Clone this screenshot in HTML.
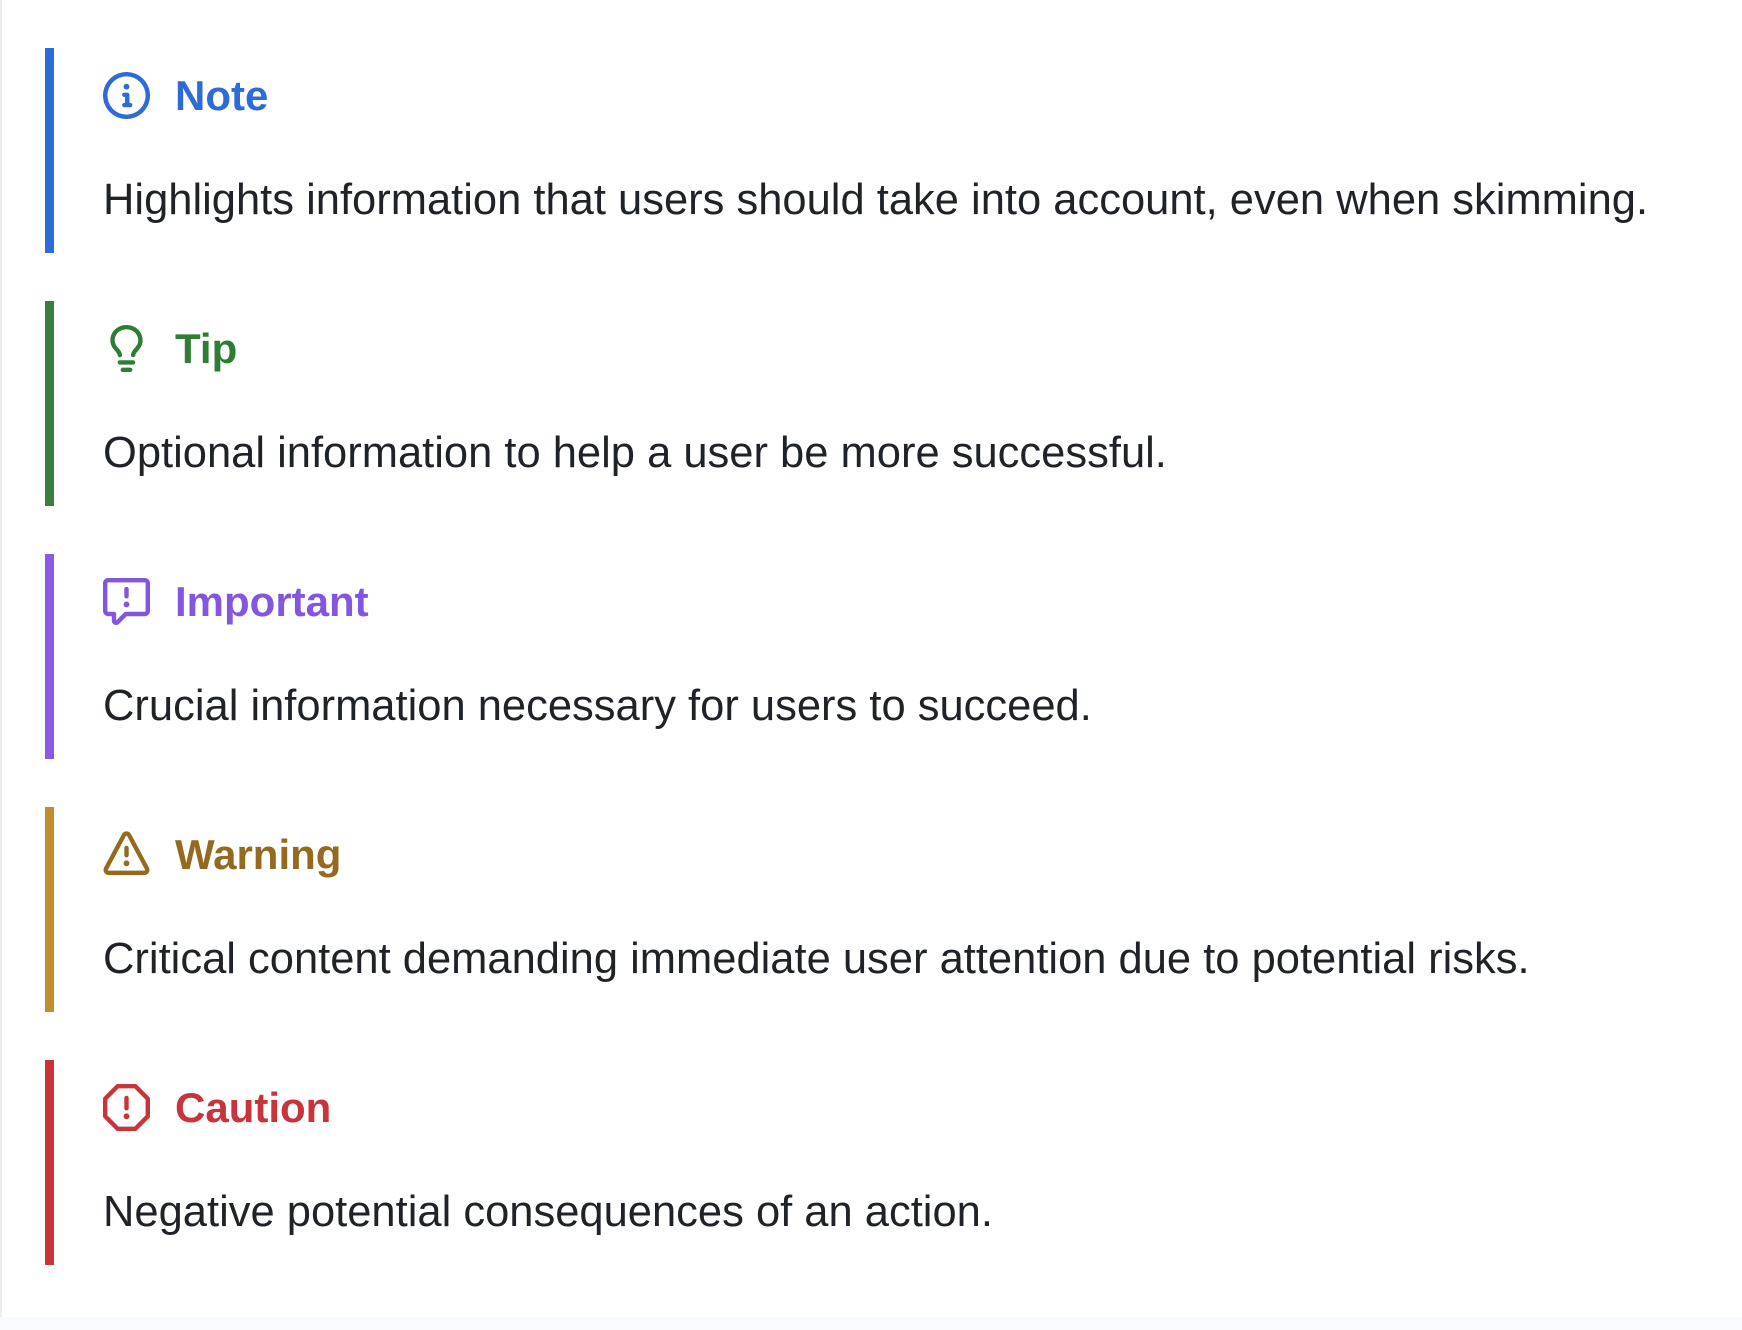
<!DOCTYPE html>
<html><head><meta charset="utf-8"><style>
html,body{margin:0;padding:0;}
body{width:1742px;height:1330px;background:#fff;position:relative;overflow:hidden;font-family:"Liberation Sans",Arial,sans-serif;}
.edge{position:absolute;left:0;top:0;width:2px;height:1330px;background:#ececec;}
.bottom{position:absolute;left:0;top:1317px;width:1742px;height:13px;background:#f9fafd;}
.blk{position:absolute;left:0;width:1742px;height:205px;}
.bar{position:absolute;left:45px;top:0;width:9px;height:205px;}
.ic{position:absolute;left:103px;top:24px;width:47px;height:47px;}
.tt{position:absolute;left:175px;top:48px;font-size:42px;font-weight:700;line-height:0;white-space:nowrap;}
.bd{position:absolute;left:103px;top:152px;font-size:43.5px;color:#1f2328;line-height:0;white-space:nowrap;}
</style></head><body>
<div class="edge"></div>

<div class="blk" style="top:48px">
<div class="bar" style="background:#2f6bd8"></div>
<svg class="ic" viewBox="0 0 16 16" fill="#2f6bd8"><path d="M0 8a8 8 0 1 1 16 0A8 8 0 0 1 0 8Zm8-6.5a6.5 6.5 0 1 0 0 13 6.5 6.5 0 0 0 0-13ZM6.5 7.75A.75.75 0 0 1 7.25 7h1a.75.75 0 0 1 .75.75v2.75h.25a.75.75 0 0 1 0 1.5h-2a.75.75 0 0 1 0-1.5h.25v-2h-.25a.75.75 0 0 1-.75-.75ZM8 6a1 1 0 1 1 0-2 1 1 0 0 1 0 2Z"/></svg>
<div class="tt" style="color:#2f6bd8">Note</div>
<div class="bd">Highlights information that users should take into account, even when skimming.</div>
</div>

<div class="blk" style="top:301px">
<div class="bar" style="background:#3a7d3f"></div>
<svg class="ic" viewBox="0 0 16 16" fill="#2f7d35"><path d="M8 1.5c-2.363 0-4 1.69-4 3.75 0 .984.424 1.625.984 2.304l.214.253c.223.264.47.556.673.848.284.411.537.896.621 1.49a.75.75 0 0 1-1.484.211c-.04-.282-.163-.547-.37-.847a8.456 8.456 0 0 0-.542-.68c-.084-.1-.173-.205-.268-.32C3.201 7.75 2.5 6.766 2.5 5.25 2.5 2.31 4.863 0 8 0s5.5 2.31 5.5 5.25c0 1.516-.701 2.5-1.328 3.259-.095.115-.184.22-.268.319-.207.245-.383.453-.541.681-.208.3-.33.565-.37.847a.751.751 0 0 1-1.485-.212c.084-.593.337-1.078.621-1.489.203-.292.45-.584.673-.848.075-.088.147-.173.213-.253.561-.679.985-1.320.985-2.304 0-2.06-1.637-3.75-4-3.75ZM5.750 12h4.5a.75.75 0 0 1 0 1.5h-4.5a.75.75 0 0 1 0-1.5ZM6 15.25a.75.75 0 0 1 .75-.75h2.5a.75.75 0 0 1 0 1.5h-2.5a.75.75 0 0 1-.75-.75Z"/></svg>
<div class="tt" style="color:#2f7d35">Tip</div>
<div class="bd">Optional information to help a user be more successful.</div>
</div>

<div class="blk" style="top:554px">
<div class="bar" style="background:#8a5ae4"></div>
<svg class="ic" viewBox="0 0 16 16" fill="#8455e0"><path d="M0 1.75C0 .784.784 0 1.75 0h12.5C15.216 0 16 .784 16 1.750v9.5A1.75 1.75 0 0 1 14.250 13H8.060l-2.573 2.573A1.458 1.458 0 0 1 3 14.543V13H1.750A1.75 1.75 0 0 1 0 11.250Zm1.75-.25a.25.25 0 0 0-.25.25v9.5c0 .138.112.25.25.25h2a.75.75 0 0 1 .75.75v2.19l2.72-2.72a.749.749 0 0 1 .53-.22h6.5a.25.25 0 0 0 .25-.25v-9.5a.25.25 0 0 0-.25-.25Zm7 2.25v2.5a.75.75 0 0 1-1.5 0v-2.5a.75.75 0 0 1 1.5 0ZM9 9a1 1 0 1 1-2 0 1 1 0 0 1 2 0Z"/></svg>
<div class="tt" style="color:#8455e0">Important</div>
<div class="bd">Crucial information necessary for users to succeed.</div>
</div>

<div class="blk" style="top:807px">
<div class="bar" style="background:#bf8e2f"></div>
<svg class="ic" viewBox="0 0 16 16" fill="#936a1f"><path d="M6.457 1.047c.659-1.234 2.427-1.234 3.086 0l6.082 11.378A1.75 1.75 0 0 1 14.082 15H1.918a1.75 1.75 0 0 1-1.543-2.575Zm1.763.707a.25.25 0 0 0-.44 0L1.698 13.132a.25.25 0 0 0 .22.368h12.164a.25.25 0 0 0 .22-.368Zm.53 3.996v2.5a.75.75 0 0 1-1.5 0v-2.5a.75.75 0 0 1 1.5 0ZM9 11a1 1 0 1 1-2 0 1 1 0 0 1 2 0Z"/></svg>
<div class="tt" style="color:#936a1f">Warning</div>
<div class="bd">Critical content demanding immediate user attention due to potential risks.</div>
</div>

<div class="blk" style="top:1060px">
<div class="bar" style="background:#c9343c"></div>
<svg class="ic" viewBox="0 0 16 16" fill="#c9343c"><path d="M4.47.22A.749.749 0 0 1 5 0h6c.199 0 .389.079.53.22l4.25 4.25c.141.14.22.331.22.53v6a.749.749 0 0 1-.22.53l-4.25 4.25A.749.749 0 0 1 11 16H5a.749.749 0 0 1-.53-.22L.22 11.53A.749.749 0 0 1 0 11V5c0-.199.079-.389.22-.53Zm.84 1.28L1.5 5.31v5.38l3.81 3.81h5.380l3.81-3.81V5.31L10.69 1.5ZM8 4a.75.75 0 0 1 .75.75v3.5a.75.75 0 0 1-1.5 0v-3.5A.75.75 0 0 1 8 4Zm0 8a1 1 0 1 1 0-2 1 1 0 0 1 0 2Z"/></svg>
<div class="tt" style="color:#c9343c">Caution</div>
<div class="bd">Negative potential consequences of an action.</div>
</div>

<div class="bottom"></div>
</body></html>
